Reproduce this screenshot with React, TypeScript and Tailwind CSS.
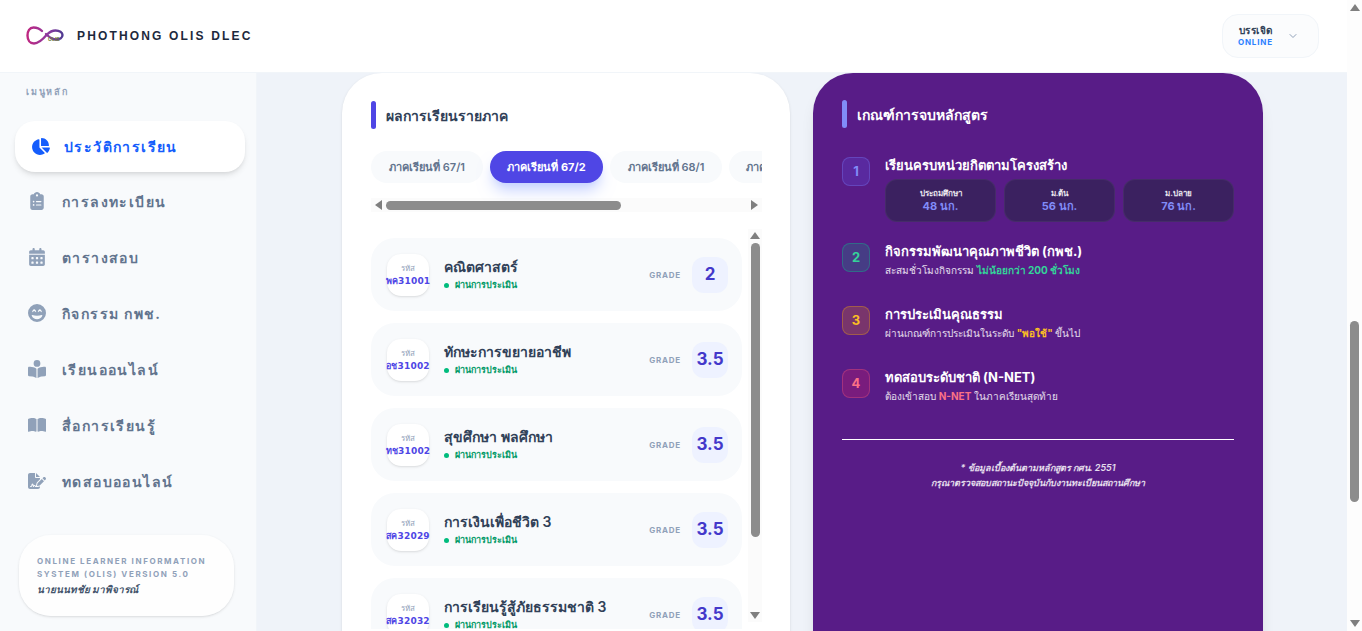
import React from 'react';
import { FaChartPie, FaClipboardList, FaBookOpen, FaBookOpenReader, FaFileSignature, FaFaceGrinBeam, FaCalendarDays } from 'react-icons/fa6';
import { LuChevronDown } from 'react-icons/lu';

const menu = [
  { label: 'การลงทะเบียน', icon: FaClipboardList },
  { label: 'ตารางสอบ', icon: FaCalendarDays },
  { label: 'กิจกรรม กพช.', icon: FaFaceGrinBeam },
  { label: 'เรียนออนไลน์', icon: FaBookOpenReader },
  { label: 'สื่อการเรียนรู้', icon: FaBookOpen },
  { label: 'ทดสอบออนไลน์', icon: FaFileSignature },
];

const terms = ['ภาคเรียนที่ 67/1', 'ภาคเรียนที่ 67/2', 'ภาคเรียนที่ 68/1', 'ภาคเรียนที่ 68/2'];

const subjects = [
  { code: 'พค31001', name: 'คณิตศาสตร์', grade: '2' },
  { code: 'อช31002', name: 'ทักษะการขยายอาชีพ', grade: '3.5' },
  { code: 'ทช31002', name: 'สุขศึกษา พลศึกษา', grade: '3.5' },
  { code: 'สค32029', name: 'การเงินเพื่อชีวิต 3', grade: '3.5' },
  { code: 'สค32032', name: 'การเรียนรู้สู้ภัยธรรมชาติ 3', grade: '3.5' },
];

const credits = [
  { label: 'ประถมศึกษา', value: '48 นก.' },
  { label: 'ม.ต้น', value: '56 นก.' },
  { label: 'ม.ปลาย', value: '76 นก.' },
];

const Arrow = ({ dir }: { dir: 'up' | 'down' | 'left' | 'right' }) => {
  const points = { up: '0,8 5,1 10,8', down: '0,2 10,2 5,9', left: '8,0 8,10 1,5', right: '2,0 2,10 9,5' }[dir];
  return (
    <svg width="10" height="10" viewBox="0 0 10 10" className="shrink-0 fill-[#7f7f7f]">
      <polygon points={points} />
    </svg>
  );
};

const Logo = () => (
  <svg width="38" height="20" viewBox="0 0 38 20" fill="none">
    <defs>
      <linearGradient id="logoGrad" x1="0" y1="0" x2="38" y2="0" gradientUnits="userSpaceOnUse">
        <stop offset="0" stopColor="#c2267f" />
        <stop offset="0.6" stopColor="#8a3aa0" />
        <stop offset="1" stopColor="#4a3a90" />
      </linearGradient>
    </defs>
    <path
      d="M16 5C13 2 10 1.500 7.500 1.500C3.500 1.500 1.500 5 1.500 9.500C1.500 14 4 17.500 8 17.500C13 17.500 18 12 21 8.500C24 5.500 26.500 4.500 29.500 4.500C33.500 4.500 36.500 6.500 36.500 9C36.500 11.500 34 13.500 30 13.500C26 13.500 23 11 20 8"
      stroke="url(#logoGrad)"
      strokeWidth="2.400"
      strokeLinecap="round"
    />
    <text x="22" y="15" fontSize="5" fontWeight="700" fill="#6b7f3a" fontFamily="Liberation Sans, sans-serif">OLIS</text>
  </svg>
);

const SectionTitle = ({ title, bar, text }: { title: string; bar: string; text: string }) => (
  <div className="flex items-center gap-[10px]">
    <div className={`w-[5px] h-[28px] rounded-full ${bar}`} />
    <h2 className={`text-[14px] font-bold ${text}`}>{title}</h2>
  </div>
);

const SubjectRow = ({ code, name, grade }: { code: string; name: string; grade: string }) => (
  <div className="h-[73px] shrink-0 rounded-[24px] bg-[#f8fafc] flex items-center pl-[16px] pr-[14px]">
    <div className="w-[42px] h-[42px] rounded-[14px] bg-white shadow-sm flex flex-col items-center justify-center">
      <span className="text-[8px] leading-[12px] text-slate-400">รหัส</span>
      <span className="text-[9px] leading-[14px] font-bold text-[#4f46e5] tracking-[0.02em] font-['DejaVu_Sans',sans-serif]">{code}</span>
    </div>
    <div className="ml-[15px] flex-1 min-w-0">
      <div className="text-[14px] leading-[20px] font-semibold text-slate-700">{name}</div>
      <div className="flex items-center gap-[6px] mt-[1px]">
        <span className="w-[5px] h-[5px] rounded-full bg-emerald-500" />
        <span className="text-[9px] leading-[14px] font-bold text-emerald-600">ผ่านการประเมิน</span>
      </div>
    </div>
    <span className="text-[8px] font-bold tracking-[0.1em] text-slate-400 mr-[11px]">GRADE</span>
    <div className="w-[36px] h-[36px] rounded-[12px] bg-[#eef2ff] flex items-center justify-center text-[17px] font-bold text-[#4338ca]">{grade}</div>
  </div>
);

const Step = ({
  num,
  box,
  title,
  children,
}: {
  num: string;
  box: string;
  title: string;
  children: React.ReactNode;
}) => (
  <div className="flex gap-[15px]">
    <div className={`w-[28px] h-[29px] shrink-0 rounded-[8px] border flex items-center justify-center text-[13px] font-bold ${box}`}>{num}</div>
    <div className="flex-1 min-w-0">
      <div className="text-[13px] leading-[16px] font-bold text-white">{title}</div>
      {children}
    </div>
  </div>
);

export default function App() {
  return (
    <div className="w-[1362px] h-[631px] overflow-hidden flex font-['Inter','Noto_Sans','Noto_Sans_CJK_SC',sans-serif] bg-[#eff3f9]">
      <div className="flex-1 min-w-0 flex flex-col">
        <header className="h-[73px] shrink-0 bg-white border-b border-slate-100 flex items-center pl-[26px] pr-[28px] relative z-10">
          <Logo />
          <span className="ml-[13px] text-[12px] font-bold tracking-[0.18em] text-slate-800 font-['Liberation_Sans',sans-serif]">PHOTHONG OLIS DLEC</span>
          <div className="ml-auto w-[97px] h-[44px] rounded-[16px] border border-slate-100 bg-slate-50/50 flex items-center pl-[15px] mb-[1px]">
            <div className="flex flex-col items-end">
              <span className="text-[10px] leading-[14px] font-bold tracking-[0.05em] text-slate-700">บรรเจิด</span>
              <span className="text-[8px] leading-[11px] font-bold tracking-[0.1em] text-blue-500">ONLINE</span>
            </div>
            <LuChevronDown className="ml-[14px] w-[12px] h-[12px] text-slate-400" />
          </div>
        </header>

        <div className="flex-1 min-h-0 flex">
          <aside className="w-[257px] shrink-0 bg-[#f8fafc] border-r border-slate-100 flex flex-col">
            <div className="pl-[26px] pt-[12px] h-[48px] text-[9px] font-bold tracking-[0.2em] text-slate-400">เมนูหลัก</div>
            <nav className="px-[15px]">
              <div className="w-[230px] h-[51px] rounded-[20px] bg-white shadow-md flex items-center pl-[16px] gap-[14px]">
                <FaChartPie className="w-[19px] h-[19px] text-blue-600" />
                <span className="text-[14px] font-bold tracking-[0.1em] text-blue-600">ประวัติการเรียน</span>
              </div>
              <div className="flex flex-col mt-[1px]">
                {menu.map(({ label, icon: Icon }) => (
                  <div key={label} className="h-[56px] flex items-center">
                    <div className="w-[47px] pl-[13px] shrink-0">
                      <Icon className="w-[18px] h-[18px] text-slate-400" />
                    </div>
                    <span className="text-[14px] font-bold tracking-[0.1em] text-slate-500">{label}</span>
                  </div>
                ))}
              </div>
            </nav>
            <div className="mt-auto mb-[15px] ml-[19px] w-[215px] h-[81px] rounded-[32px] bg-white/80 shadow-sm px-[18px] flex flex-col justify-center">
              <p className="text-[8px] leading-[13px] font-bold tracking-[0.2em] text-slate-400">ONLINE LEARNER INFORMATION SYSTEM (OLIS) VERSION 5.0</p>
              <p className="text-[10px] leading-[16px] font-bold italic text-slate-600">นายนนทชัย มาพิจารณ์</p>
            </div>
          </aside>

          <main className="flex-1 min-w-0 flex justify-center gap-[23px] overflow-hidden pl-[1px]">
            <section className="w-[448px] h-[620px] shrink-0 rounded-[40px] bg-white shadow-sm px-[29px] pt-[28px]">
              <SectionTitle title="ผลการเรียนรายภาค" bar="bg-[#4f46e5]" text="text-slate-700" />
              <div className="mt-[22px] w-[391px] overflow-hidden">
                <div className="flex gap-[7px] pb-[15px]">
                  {terms.map((term, i) => (
                    <div
                      key={term}
                      className={
                        i === 1
                          ? 'w-[113px] h-[32px] shrink-0 rounded-full bg-[#4f46e5] shadow-lg shadow-indigo-200 flex items-center justify-center text-[11px] font-bold text-white'
                          : 'w-[112px] h-[32px] shrink-0 rounded-full bg-[#f8fafc] flex items-center justify-center text-[11px] font-semibold text-slate-500'
                      }
                    >
                      {term}
                    </div>
                  ))}
                </div>
                <div className="h-[14px] bg-[#fbfbfb] flex items-center px-[3px]">
                  <Arrow dir="left" />
                  <div className="ml-[2px] w-[235px] h-[9px] rounded-full bg-[#8c8c8c]" />
                  <div className="flex-1" />
                  <Arrow dir="right" />
                </div>
              </div>
              <div className="mt-[17px] w-[391px] flex h-[400px]">
                <div className="w-[371px] shrink-0 flex flex-col gap-[12px] pt-[9px] overflow-hidden">
                  {subjects.map((s) => (
                    <SubjectRow key={s.code} {...s} />
                  ))}
                </div>
                <div className="ml-[6px] w-[14px] h-[393px] bg-[#fbfbfb] flex flex-col items-center pt-[2px] pb-[2px]">
                  <Arrow dir="up" />
                  <div className="mt-[2px] w-[9px] h-[294px] rounded-full bg-[#8c8c8c]" />
                  <div className="flex-1" />
                  <Arrow dir="down" />
                </div>
              </div>
            </section>

            <section className="w-[450px] h-[620px] shrink-0 rounded-[40px] bg-[#581c87] shadow-lg px-[29px] pt-[27px]">
              <SectionTitle title="เกณฑ์การจบหลักสูตร" bar="bg-[#818cf8]" text="text-white" />
              <div className="mt-[29px] flex flex-col">
                <Step num="1" box="bg-indigo-500/20 border-indigo-400/30 text-[#818cf8]" title="เรียนครบหน่วยกิตตามโครงสร้าง">
                  <div className="grid grid-cols-3 gap-[8px] mt-[6px]">
                    {credits.map((c) => (
                      <div key={c.label} className="h-[43px] rounded-[12px] bg-[#3b2160] border border-white/5 flex flex-col items-center justify-center">
                        <span className="text-[8px] leading-[12px] font-bold text-white/90">{c.label}</span>
                        <span className="text-[11px] leading-[15px] font-bold text-[#818cf8]">{c.value}</span>
                      </div>
                    ))}
                  </div>
                </Step>
                <div className="mt-[21px]">
                  <Step num="2" box="bg-emerald-500/20 border-emerald-400/30 text-[#34d399]" title="กิจกรรมพัฒนาคุณภาพชีวิต (กพช.)">
                    <p className="mt-[4px] text-[10px] leading-[14px] font-medium text-white/85">
                      สะสมชั่วโมงกิจกรรม <span className="font-bold text-[#34d399]">ไม่น้อยกว่า 200 ชั่วโมง</span>
                    </p>
                  </Step>
                </div>
                <div className="mt-[29px]">
                  <Step num="3" box="bg-amber-500/20 border-amber-400/30 text-[#fbbf24]" title="การประเมินคุณธรรม">
                    <p className="mt-[4px] text-[10px] leading-[14px] font-medium text-white/85">
                      ผ่านเกณฑ์การประเมินในระดับ <span className="font-bold text-[#fbbf24]">"พอใช้"</span> ขึ้นไป
                    </p>
                  </Step>
                </div>
                <div className="mt-[29px]">
                  <Step num="4" box="bg-rose-500/20 border-rose-400/30 text-[#fb7185]" title="ทดสอบระดับชาติ (N-NET)">
                    <p className="mt-[4px] text-[10px] leading-[14px] font-medium text-white/85">
                      ต้องเข้าสอบ <span className="font-bold text-[#fb7185]">N-NET</span> ในภาคเรียนสุดท้าย
                    </p>
                  </Step>
                </div>
              </div>
              <div className="mt-[36px] border-t border-white pt-[20px] text-center text-[9px] leading-[15px] font-semibold italic text-white/85">
                <p>* ข้อมูลเบื้องต้นตามหลักสูตร กศน. 2551</p>
                <p>กรุณาตรวจสอบสถานะปัจจุบันกับงานทะเบียนสถานศึกษา</p>
              </div>
            </section>
          </main>
        </div>
      </div>

      <div className="w-[15px] shrink-0 bg-[#fdfdfd] flex flex-col items-center py-[3px]">
        <Arrow dir="up" />
        <div className="mt-[308px] w-[9px] h-[181px] rounded-full bg-[#8c8c8c]" />
        <div className="flex-1" />
        <Arrow dir="down" />
      </div>
    </div>
  );
}
